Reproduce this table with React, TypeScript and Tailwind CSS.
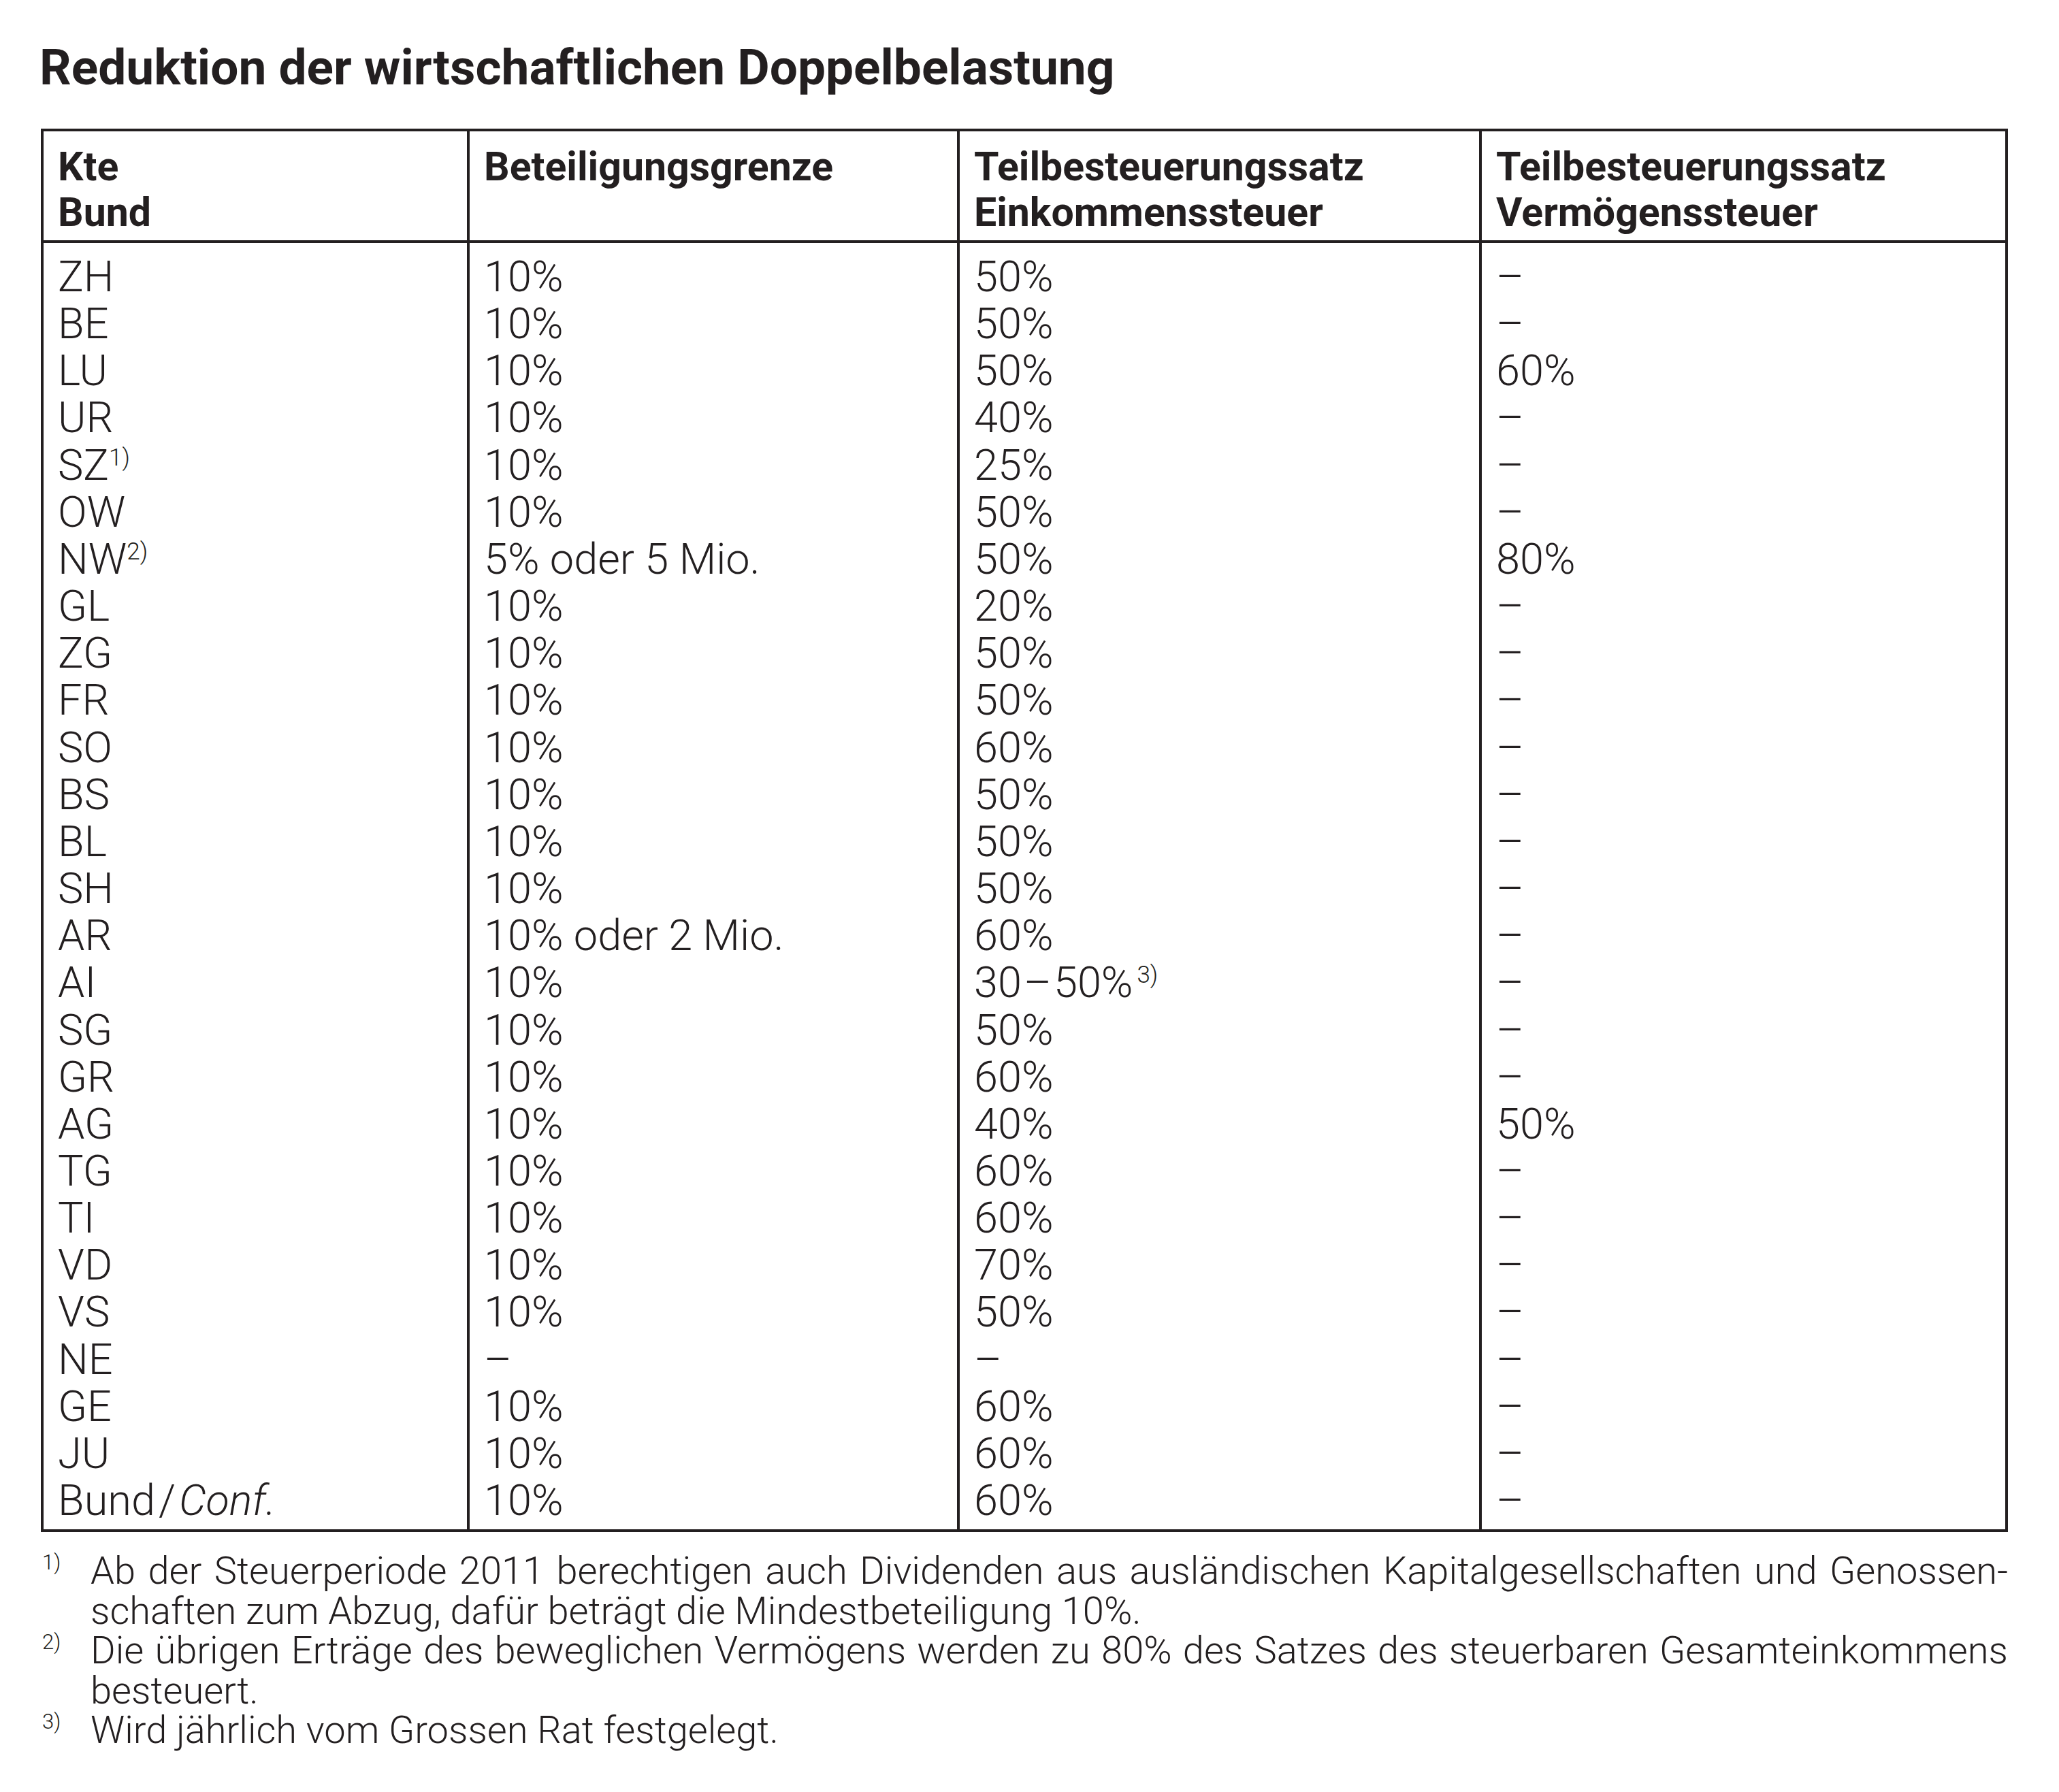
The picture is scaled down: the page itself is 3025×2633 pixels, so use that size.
import React from "react";

type Row = { k: React.ReactNode; a: React.ReactNode; b: React.ReactNode; c: React.ReactNode };

const Sup = ({ children }: { children: React.ReactNode }) => (
  <span className="text-[35px] leading-none align-[21px]">{children}</span>
);

const D = "–";

const rows: Row[] = [
  { k: "ZH", a: "10%", b: "50%", c: D },
  { k: "BE", a: "10%", b: "50%", c: D },
  { k: "LU", a: "10%", b: "50%", c: "60%" },
  { k: "UR", a: "10%", b: "40%", c: D },
  { k: <>SZ<Sup>1)</Sup></>, a: "10%", b: "25%", c: D },
  { k: "OW", a: "10%", b: "50%", c: D },
  { k: <>NW<Sup>2)</Sup></>, a: "5% oder 5 Mio.", b: "50%", c: "80%" },
  { k: "GL", a: "10%", b: "20%", c: D },
  { k: "ZG", a: "10%", b: "50%", c: D },
  { k: "FR", a: "10%", b: "50%", c: D },
  { k: "SO", a: "10%", b: "60%", c: D },
  { k: "BS", a: "10%", b: "50%", c: D },
  { k: "BL", a: "10%", b: "50%", c: D },
  { k: "SH", a: "10%", b: "50%", c: D },
  { k: "AR", a: "10% oder 2 Mio.", b: "60%", c: D },
  {
    k: "AI",
    a: "10%",
    b: (
      <>
        30<span className="mx-[3px]">–</span>50%<span className="ml-[6px]"><Sup>3)</Sup></span>
      </>
    ),
    c: D,
  },
  { k: "SG", a: "10%", b: "50%", c: D },
  { k: "GR", a: "10%", b: "60%", c: D },
  { k: "AG", a: "10%", b: "40%", c: "50%" },
  { k: "TG", a: "10%", b: "60%", c: D },
  { k: "TI", a: "10%", b: "60%", c: D },
  { k: "VD", a: "10%", b: "70%", c: D },
  { k: "VS", a: "10%", b: "50%", c: D },
  { k: "NE", a: D, b: D, c: D },
  { k: "GE", a: "10%", b: "60%", c: D },
  { k: "JU", a: "10%", b: "60%", c: D },
  {
    k: (
      <>
        Bund<span className="mx-[5px]">/</span>
        <span className="italic">Conf.</span>
      </>
    ),
    a: "10%",
    b: "60%",
    c: D,
  },
];

const FN = ({ mark, children }: { mark: string; children: React.ReactNode }) => (
  <div className="grid grid-cols-[73px_2817px]">
    <div className="pl-[2px]">
      <span className="text-[31px] leading-none align-[21px]">{mark}</span>
    </div>
    <div>{children}</div>
  </div>
);

export default function App() {
  const headCell =
    "h-[164px] border-b-4 border-[#231f20] pt-[18px] pl-[21px] font-bold text-[59px] leading-[67px]";
  const bodyCell = "pl-[21px] leading-[69.15px] whitespace-nowrap";
  return (
    <div
      className="w-[3025px] min-h-[2633px] bg-white text-[#231f20] pl-[60px] pt-[63px]"
      style={{ fontFamily: "Roboto, 'Liberation Sans', sans-serif" }}
    >
      <h1 className="font-bold text-[73px] leading-[73px] -ml-[2px] mb-[53px]">
        Reduktion der wirtschaftlichen Doppelbelastung
      </h1>

      <div className="w-[2890px] border-4 border-[#231f20] grid grid-cols-[626px_720px_767px_769px] font-light text-[63px]">
        <div className={`${headCell} border-r-4`}>
          Kte
          <br />
          Bund
        </div>
        <div className={`${headCell} border-r-4`}>Beteiligungsgrenze</div>
        <div className={`${headCell} border-r-4`}>
          Teilbesteuerungssatz
          <br />
          Einkommenssteuer
        </div>
        <div className={headCell}>
          Teilbesteuerungssatz
          <br />
          Vermögenssteuer
        </div>

        {rows.map((r, i) => {
          const pad = i === 0 ? " pt-[15px]" : i === rows.length - 1 ? " pb-[8px]" : "";
          return (
            <React.Fragment key={i}>
              <div className={`${bodyCell} border-r-4 border-[#231f20]${pad}`}>{r.k}</div>
              <div className={`${bodyCell} border-r-4 border-[#231f20]${pad}`}>{r.a}</div>
              <div className={`${bodyCell} border-r-4 border-[#231f20]${pad}`}>{r.b}</div>
              <div className={`${bodyCell}${pad}`}>{r.c}</div>
            </React.Fragment>
          );
        })}
      </div>

      <div className="mt-[28px] font-light text-[56px] leading-[58.5px]">
        <FN mark="1)">
          <div className="text-justify [text-align-last:justify] whitespace-nowrap">
            Ab der Steuerperiode 2011 berechtigen auch Dividenden aus ausländischen Kapitalgesellschaften und Genossen-
          </div>
          <div>schaften zum Abzug, dafür beträgt die Mindestbeteiligung 10%.</div>
        </FN>
        <FN mark="2)">
          <div className="text-justify [text-align-last:justify] whitespace-nowrap">
            Die übrigen Erträge des beweglichen Vermögens werden zu 80% des Satzes des steuerbaren Gesamteinkommens
          </div>
          <div>besteuert.</div>
        </FN>
        <FN mark="3)">
          <div>Wird jährlich vom Grossen Rat festgelegt.</div>
        </FN>
      </div>
    </div>
  );
}
